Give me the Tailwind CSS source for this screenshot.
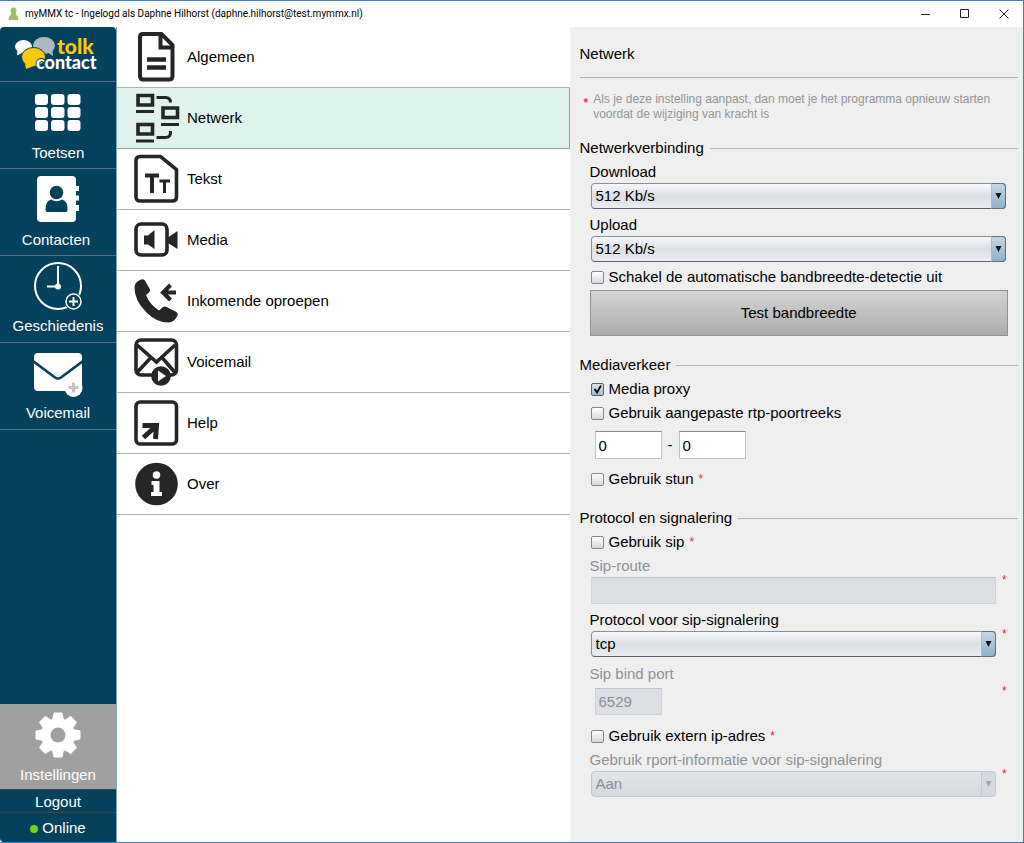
<!DOCTYPE html>
<html lang="nl">
<head>
<meta charset="utf-8">
<title>myMMX tc</title>
<script src="https://cdn.jsdelivr.net/npm/@tailwindcss/browser@4"></script>
</head>
<body class="flex min-h-screen flex-col border-t border-r border-b border-[#3c82c4] bg-white font-['Liberation_Sans',Arial,sans-serif] text-[15px] text-black">

<header class="flex h-[26px] shrink-0 items-center pl-2">
  <svg class="h-4 w-[11px] shrink-0" viewBox="0 0 11 16" aria-hidden="true">
    <path d="M5.500 1.500a3 3 0 0 1 2.300 5L8 9q2.300.5 2.300 5H.7Q.7 9.500 3 9l.2-2.500a3 3 0 0 1 2.300-5z" fill="#9cc15a"/>
  </svg>
  <h1 class="ml-[6px] flex-1 whitespace-nowrap font-[Roboto,sans-serif] text-[10px] leading-4">myMMX tc - Ingelogd als Daphne Hilhorst (daphne.hilhorst@test.mymmx.nl)</h1>
  <div class="flex">
    <button type="button" aria-label="Minimaliseren" class="flex h-6 w-[39px] items-center justify-center"><svg class="size-[10px]" viewBox="0 0 10 10"><path d="M0 5.500h9" stroke="#222" fill="none"/></svg></button>
    <button type="button" aria-label="Maximaliseren" class="flex h-6 w-[39px] items-center justify-center"><svg class="size-[10px]" viewBox="0 0 10 10"><path d="M.5.500h8v8h-8z" stroke="#222" fill="none"/></svg></button>
    <button type="button" aria-label="Sluiten" class="flex h-6 w-[39px] items-center justify-center"><svg class="size-[10px]" viewBox="0 0 10 10"><path d="M.5.500l9 9M9.500.5l-9 9" stroke="#222" fill="none"/></svg></button>
  </div>
</header>

<div class="flex flex-1">
  <nav class="flex w-[116px] shrink-0 flex-col overflow-hidden rounded-t rounded-bl bg-[#04415c] text-white">
    <div class="flex h-[55px] items-center justify-center border-b border-[#5d6f7c]">
      <svg class="h-[44px] w-[88px]" viewBox="0 0 88 44" role="img" aria-label="tolk contact">
        <ellipse cx="9.500" cy="14.500" rx="8.500" ry="6.500" fill="#fff"/>
        <path d="M3.500 17L3 23.500l6-3z" fill="#fff"/>
        <ellipse cx="30" cy="13.500" rx="11" ry="8.500" fill="#aeb9bd"/>
        <path d="M33 20l6 4-.5-7z" fill="#aeb9bd"/>
        <ellipse cx="19.500" cy="25" rx="12" ry="9.500" fill="#fdc70c" stroke="#04415c"/>
        <path d="M11 31l1 6 8-3z" fill="#fdc70c"/>
        <text x="43" y="22" fill="#fdc70c" font-family="Lato, sans-serif" font-weight="900" font-size="21">tolk</text>
        <text x="22" y="37" fill="#fff" stroke="#04415c" stroke-width="2" paint-order="stroke" font-family="Lato, sans-serif" font-weight="900" font-size="18">contact</text>
      </svg>
    </div>
    <a href="#toetsen" class="flex h-[87px] flex-col items-center border-b border-[#5d6f7c] pt-3">
      <svg class="h-[37px] w-[46px]" viewBox="0 0 46 37" fill="#fff" aria-hidden="true">
        <rect x="0" y="0" width="13" height="11" rx="3"/><rect x="16" y="0" width="13.500" height="11" rx="3"/><rect x="32.500" y="0" width="13" height="11" rx="3"/>
        <rect x="0" y="13" width="13" height="11" rx="3"/><rect x="16" y="13" width="13.500" height="11" rx="3"/><rect x="32.500" y="13" width="13" height="11" rx="3"/>
        <rect x="0" y="26" width="13" height="11" rx="3"/><rect x="16" y="26" width="13.500" height="11" rx="3"/><rect x="32.500" y="26" width="13" height="11" rx="3"/>
      </svg>
      <span class="mt-[10px] leading-6">Toetsen</span>
    </a>
    <a href="#contacten" class="flex h-[87px] flex-col items-center border-b border-[#5d6f7c] pt-[6px]">
      <svg class="h-[48px] w-[44px]" viewBox="0 0 44 48" aria-hidden="true">
        <rect x="1" y="1" width="39" height="46" rx="4" fill="#fff"/>
        <path d="M39 11h4v5h-4zM39 20.500h4v5h-4zM39 30h4v6h-4z" fill="#fff"/>
        <circle cx="20.500" cy="17.500" r="6.800" fill="#04415c"/>
        <path d="M11 37q-1.500 0-1.500-2 0-9 5.500-10.500 5.500 3.500 11 0 6 1.500 5.500 10.500 0 2-1.500 2z" fill="#04415c"/>
      </svg>
      <span class="mt-[5px] pr-1 leading-6">Contacten</span>
    </a>
    <a href="#geschiedenis" class="flex h-[87px] flex-col items-center border-b border-[#5d6f7c] pt-[5px]">
      <svg class="h-[50px] w-[50px]" viewBox="0 0 50 50" fill="none" stroke="#fff" aria-hidden="true">
        <circle cx="25" cy="25" r="23" stroke-width="2"/>
        <path d="M25 5v20M14 25.500h11" stroke-width="2"/>
        <circle cx="25" cy="25.500" r="3" fill="#fff" stroke="none"/>
        <circle cx="40.500" cy="40.500" r="9" fill="#04415c" stroke="none"/>
        <circle cx="40.500" cy="40.500" r="7.500" fill="#04415c" stroke-width="1.500"/>
        <path d="M40.500 36v9M36 40.500h9" stroke-width="2"/>
      </svg>
      <span class="mt-[3px] leading-6">Geschiedenis</span>
    </a>
    <a href="#voicemail" class="flex h-[87px] flex-col items-center border-b border-[#5d6f7c] pt-[9px]">
      <svg class="h-[46px] w-[50px]" viewBox="0 0 50 46" aria-hidden="true">
        <rect x="1" y="1" width="48" height="38" rx="4" fill="#fff"/>
        <path d="M0 9l22 16.500q3 2 6 0L50 9" fill="none" stroke="#04415c" stroke-width="2.600"/>
        <circle cx="40.500" cy="36" r="9" fill="#fff"/>
        <path d="M40.500 30.500v10M35.500 35.500h10" stroke="#c3c3c8" stroke-width="3"/>
      </svg>
      <span class="mt-[3px] leading-6">Voicemail</span>
    </a>
    <a href="#instellingen" class="mt-auto flex h-[86px] flex-col items-center border-b border-[#47404a] bg-[#a0a0a0] pt-2">
      <svg class="h-[46px] w-[46px]" viewBox="-23 -23 46 46" aria-hidden="true">
        <g fill="#fff" stroke="#fff" stroke-linejoin="round">
          <circle r="16.500"/>
          <path id="tooth" d="M-5.500-15l1.500-7h8l1.500 7z"/>
          <use href="#tooth" transform="rotate(45)"/><use href="#tooth" transform="rotate(90)"/><use href="#tooth" transform="rotate(135)"/><use href="#tooth" transform="rotate(180)"/><use href="#tooth" transform="rotate(225)"/><use href="#tooth" transform="rotate(270)"/><use href="#tooth" transform="rotate(315)"/>
        </g>
        <circle r="7.500" fill="#a0a0a0"/>
      </svg>
      <span class="mt-[5px] leading-6">Instellingen</span>
    </a>
    <a href="#logout" class="flex h-[23px] items-center justify-center border-b border-[#47404a] pt-[2px]">Logout</a>
    <button type="button" class="flex h-[29px] items-center justify-center gap-1 pt-[2px]"><span class="size-2 rounded-full bg-[#6fd61d]"></span>Online</button>
  </nav>

  <main class="grid flex-1 grid-cols-2">
    <ul class="min-w-0 border-l border-[#7fa5b9]">
      <li><a href="#algemeen" class="flex h-[61px] items-center gap-[7px] border-b border-[#b0b4b4] pl-4">
        <svg class="h-[50px] w-[47px]" viewBox="0 0 47 50" fill="none" stroke="#262626" aria-hidden="true"><path d="M10 2h18.500L39.500 13v31q0 3.500-3.500 3.500H10.500Q7 47.500 7 44V5q0-3 3-3z" stroke-width="4"/><path d="M27.500 3v12.500h12" stroke-width="4"/><path d="M14 27.500h19M14 35.500h19" stroke-width="4.500"/></svg>
        Algemeen</a></li>
      <li><a href="#netwerk" aria-current="page" class="flex h-[61px] items-center gap-[7px] border-r border-b border-[#8fa69d] bg-[#dff2ec] pl-4">
        <svg class="h-[50px] w-[47px]" viewBox="0 0 47 50" fill="none" stroke="#262626" aria-hidden="true"><path d="M5 2.500h14.500V12H5zM30 15h14.500v9.500H30zM5 31.500h14.500V41H5z" stroke-width="3.600"/><path d="M3 18.500h18M28 31.500h18M3 48h18" stroke-width="3"/><path d="M23.500 4.500h9q5 0 5 5M23.500 44.500h9q5 0 5-5V38" stroke-width="3"/></svg>
        Netwerk</a></li>
      <li><a href="#tekst" class="flex h-[61px] items-center gap-[7px] border-b border-[#b0b4b4] pl-4">
        <svg class="h-[50px] w-[47px]" viewBox="0 0 47 50" fill="none" stroke="#262626" aria-hidden="true"><path d="M7 2.500h20.500L43.500 15.500V43q0 4-4 4H7q-4 0-4-4V6.500q0-4 4-4z" stroke-width="3.600"/><path d="M12 21.500h14M19 21.500v17.500" stroke-width="4"/><path d="M26.500 27h10.500M31.500 27v12" stroke-width="3"/></svg>
        Tekst</a></li>
      <li><a href="#media" class="flex h-[61px] items-center gap-[7px] border-b border-[#b0b4b4] pl-4">
        <svg class="h-[36px] w-[47px]" viewBox="0 0 47 36" aria-hidden="true"><rect x="3" y="2" width="31" height="31" rx="5" fill="none" stroke="#262626" stroke-width="3.600"/><path d="M11 13.500h4l6.500-5.500v19L15 22.500h-4zM34 16l10.500-7v18L34 20.500z" fill="#262626"/></svg>
        Media</a></li>
      <li><a href="#oproepen" class="flex h-[61px] items-center gap-[7px] border-b border-[#b0b4b4] pl-4">
        <svg class="h-[46px] w-[47px]" viewBox="0 0 47 46" aria-hidden="true"><path d="M1.500 9Q2 4 7 2q3-1.500 5 .5l5 9q.5 1.500-1 3l-3 2.500q4 10 13 15.500l4-3.500q2-1 3.500 0l10 5q2 1.500 1 3.500-3.500 7-9 7-12 0-22-10Q1 22 1.500 9z" fill="#262626"/><path d="M43 14.500H31M37.500 7L30 14.500l7.500 7.500" fill="none" stroke="#262626" stroke-width="4"/></svg>
        Inkomende oproepen</a></li>
      <li><a href="#voicemail-instellingen" class="flex h-[61px] items-center gap-[7px] border-b border-[#b0b4b4] pl-4">
        <svg class="h-[48px] w-[47px]" viewBox="0 0 47 48" fill="none" stroke="#262626" aria-hidden="true"><rect x="3" y="2" width="40.500" height="35" rx="5" stroke-width="3.600"/><path d="M4 7l19.500 17L42 7M4 34.500l14-15M42 34.500L29 19.500" stroke-width="3.600"/><circle cx="28" cy="38" r="9.800" fill="#262626" stroke="none"/><path d="M25 32.500l8 5.500-8 5.500z" fill="#fff" stroke="none"/></svg>
        Voicemail</a></li>
      <li><a href="#help" class="flex h-[61px] items-center gap-[7px] border-b border-[#b0b4b4] pl-4">
        <svg class="h-[46px] w-[47px]" viewBox="0 0 47 46" fill="none" stroke="#262626" aria-hidden="true"><rect x="3" y="2" width="40.500" height="42" rx="4" stroke-width="3.600"/><path d="M10.500 37.500L22 27M9.500 25.500h14L22.500 39" stroke-width="5"/></svg>
        Help</a></li>
      <li><a href="#over" class="flex h-[61px] items-center gap-[7px] border-b border-[#b0b4b4] pl-4">
        <svg class="h-[44px] w-[47px]" viewBox="0 0 47 44" aria-hidden="true"><circle cx="23.500" cy="22" r="21.300" fill="#262626"/><circle cx="23.500" cy="13" r="3.800" fill="#fff"/><path d="M18.500 19h8v11h2.500v4H18v-4h2.500v-7h-2z" fill="#fff"/></svg>
        Over</a></li>
    </ul>

    <form class="min-w-0 border-r-2 border-[#e3f1f5] bg-[#efefef] pt-1 pr-[3px] pb-4 pl-[10px]">
      <h2 class="flex h-[47px] items-center border-b border-[#adadad]">Netwerk</h2>
      <p class="mt-[14px] flex gap-[5px] pl-1 text-[12px] leading-[15px] text-[#959595]"><span class="pt-1 font-bold text-[#e8384f]">*</span><span>Als je deze instelling aanpast, dan moet je het programma opnieuw starten voordat de wijziging van kracht is</span></p>

      <section class="mt-[14px]">
        <h3 class="flex items-center gap-[6px] leading-6 after:h-px after:flex-1 after:bg-[#b4b4b4]">Netwerkverbinding</h3>
        <div class="px-[10px]">
          <label for="download" class="block leading-[23px]">Download</label>
          <div class="relative mr-[2px] ml-px">
            <select id="download" class="block h-[26px] w-full appearance-none rounded border border-[#8b919b] border-b-[#5a6270] bg-linear-to-b from-[#f7f8fa] via-[#dcdfe5] to-[#e9ecf1] px-1"><option>512 Kb/s</option></select>
            <span class="pointer-events-none absolute inset-y-0 right-0 flex w-[15px] items-center justify-center rounded-r border border-[#59728c] border-l-[#a9bccb] bg-linear-to-b from-[#c5d6e3] to-[#8fb0c8]"><svg class="size-[7px]" viewBox="0 0 7 7"><path d="M.5 0h6l-3 6z" fill="#0b1620"/></svg></span>
          </div>
          <label for="upload" class="mt-1 block leading-[23px]">Upload</label>
          <div class="relative mr-[2px] ml-px">
            <select id="upload" class="block h-[26px] w-full appearance-none rounded border border-[#8b919b] border-b-[#5a6270] bg-linear-to-b from-[#f7f8fa] via-[#dcdfe5] to-[#e9ecf1] px-1"><option>512 Kb/s</option></select>
            <span class="pointer-events-none absolute inset-y-0 right-0 flex w-[15px] items-center justify-center rounded-r border border-[#59728c] border-l-[#a9bccb] bg-linear-to-b from-[#c5d6e3] to-[#8fb0c8]"><svg class="size-[7px]" viewBox="0 0 7 7"><path d="M.5 0h6l-3 6z" fill="#0b1620"/></svg></span>
          </div>
          <label class="mt-[3px] flex items-center gap-[5px] pl-px leading-6"><input type="checkbox" class="size-[13px] appearance-none rounded-xs border border-[#7f8794] bg-linear-to-b from-white to-[#d5d8de]">Schakel de automatische bandbreedte-detectie uit</label>
          <button type="button" class="mt-px h-[46px] w-full border border-[#929292] bg-linear-to-b from-[#d3d3d3] to-[#adadad]">Test bandbreedte</button>
        </div>
      </section>

      <section class="mt-[17px]">
        <h3 class="flex items-center gap-[6px] leading-6 after:h-px after:flex-1 after:bg-[#b4b4b4]">Mediaverkeer</h3>
        <div class="px-[10px]">
          <div class="flex items-center pl-px leading-6">
            <span class="relative flex"><input id="proxy" type="checkbox" checked class="size-[13px] appearance-none rounded-xs border border-[#4d6076] bg-linear-to-b from-[#dbe6ef] to-[#a3bdd1]"><svg class="pointer-events-none absolute inset-0 size-[13px]" viewBox="0 0 13 13"><path d="M3.500 6l2.500 3.500L10 2.500" fill="none" stroke="#000" stroke-width="1.800"/></svg></span>
            <label for="proxy" class="pl-[5px]">Media proxy</label>
          </div>
          <label class="flex items-center gap-[5px] pl-px leading-6"><input type="checkbox" class="size-[13px] appearance-none rounded-xs border border-[#7f8794] bg-linear-to-b from-white to-[#d5d8de]">Gebruik aangepaste rtp-poortreeks</label>
          <div class="mt-[6px] flex items-center gap-[6px] pl-[5px]">
            <input type="text" value="0" aria-label="Eerste poort" class="h-7 w-[67px] border border-[#bfc2c8] border-t-[#85888e] bg-white px-[3px]">
            <span>-</span>
            <input type="text" value="0" aria-label="Laatste poort" class="h-7 w-[67px] border border-[#bfc2c8] border-t-[#85888e] bg-white px-[3px]">
          </div>
          <label class="mt-2 flex items-center gap-[5px] pl-px leading-6"><input type="checkbox" class="size-[13px] appearance-none rounded-xs border border-[#7f8794] bg-linear-to-b from-white to-[#d5d8de]">Gebruik stun <span class="text-xs leading-6 text-[#e8203c]">*</span></label>
        </div>
      </section>

      <section class="mt-[15px]">
        <h3 class="flex items-center gap-[6px] leading-6 after:h-px after:flex-1 after:bg-[#b4b4b4]">Protocol en signalering</h3>
        <div class="px-[10px]">
          <label class="flex items-center gap-[5px] pl-px leading-6"><input type="checkbox" class="size-[13px] appearance-none rounded-xs border border-[#7f8794] bg-linear-to-b from-white to-[#d5d8de]">Gebruik sip <span class="text-xs leading-6 text-[#e8203c]">*</span></label>
          <label for="route" class="block leading-[23px] text-[#8f9194]">Sip-route</label>
          <div class="flex pl-px">
            <input id="route" type="text" disabled class="h-[27px] min-w-0 flex-1 border border-[#cfd3da] border-t-[#bfc4cd] bg-[#dcdfe4] px-1">
            <span class="w-3 pl-[6px] text-xs leading-[6px] text-[#e8203c]">*</span>
          </div>
          <label for="protocol" class="mt-1 block leading-[23px]">Protocol voor sip-signalering</label>
          <div class="flex pl-px">
            <div class="relative flex-1">
              <select id="protocol" class="block h-[26px] w-full appearance-none rounded border border-[#8b919b] border-b-[#5a6270] bg-linear-to-b from-[#f7f8fa] via-[#dcdfe5] to-[#e9ecf1] px-1"><option>tcp</option></select>
              <span class="pointer-events-none absolute inset-y-0 right-0 flex w-[15px] items-center justify-center rounded-r border border-[#59728c] border-l-[#a9bccb] bg-linear-to-b from-[#c5d6e3] to-[#8fb0c8]"><svg class="size-[7px]" viewBox="0 0 7 7"><path d="M.5 0h6l-3 6z" fill="#0b1620"/></svg></span>
            </div>
            <span class="w-3 pl-[6px] text-xs leading-[6px] text-[#e8203c]">*</span>
          </div>
          <label for="bind" class="mt-[5px] block leading-[23px] text-[#8f9194]">Sip bind port</label>
          <div class="mt-[3px] flex justify-between pl-[5px]">
            <input id="bind" type="text" value="6529" disabled class="h-[27px] w-[67px] border border-[#cfd3da] border-t-[#bfc4cd] bg-[#dcdfe4] px-[3px] text-[#8a8e96]">
            <span class="w-3 pl-[6px] text-xs leading-[6px] text-[#e8203c]">*</span>
          </div>
          <label class="mt-[9px] flex items-center gap-[5px] pl-px leading-6"><input type="checkbox" class="size-[13px] appearance-none rounded-xs border border-[#7f8794] bg-linear-to-b from-white to-[#d5d8de]">Gebruik extern ip-adres <span class="text-xs leading-6 text-[#e8203c]">*</span></label>
          <label for="rport" class="block leading-[23px] text-[#8f9194]">Gebruik rport-informatie voor sip-signalering</label>
          <div class="flex pl-px">
            <div class="relative flex-1">
              <select id="rport" disabled class="block h-[26px] w-full appearance-none rounded border border-[#c3c7ce] bg-linear-to-b from-[#e1e4e8] to-[#d6d9de] px-1 text-[#8a8e96] opacity-100"><option>Aan</option></select>
              <span class="pointer-events-none absolute inset-y-0 right-0 flex w-[15px] items-center justify-center rounded-r border border-[#c3c7ce] bg-[#d3dae1]"><svg class="size-[7px]" viewBox="0 0 7 7"><path d="M.5 0h6l-3 6z" fill="#9da3ab"/></svg></span>
            </div>
            <span class="w-3 pl-[6px] text-xs leading-[6px] text-[#e8203c]">*</span>
          </div>
        </div>
      </section>
    </form>
  </main>
</div>
</body>
</html>
